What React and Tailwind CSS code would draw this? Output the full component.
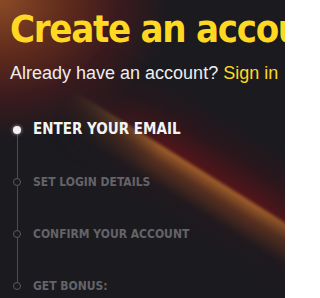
import React from "react";

const steps = [
  { label: "ENTER YOUR EMAIL", active: true },
  { label: "SET LOGIN DETAILS" },
  { label: "CONFIRM YOUR ACCOUNT" },
  { label: "GET BONUS:" },
];

export default function App() {
  return (
    <div className="relative w-[285px] h-[298px] overflow-hidden bg-[#1b1a1f]">
      <div className="absolute inset-0 bg-[radial-gradient(ellipse_170px_140px_at_0px_0px,#8a4a26_0%,#5e2a1c_40%,#3a1a1e_70%,transparent_100%)]" />
      <div className="absolute left-[-10px] top-[104px] w-[400px] h-[120px] rotate-[32deg] bg-[linear-gradient(to_bottom,transparent_0%,rgba(80,16,22,0.3)_25%,rgba(100,20,24,0.75)_49%,#a2602a_50%,rgba(130,64,32,0.6)_62%,rgba(50,24,28,0.25)_80%,transparent_100%)] blur-[1.5px] [mask-image:linear-gradient(to_right,transparent_15%,black_42%,black_70%,rgba(0,0,0,0.55)_100%)]" />
      <div className="relative flex flex-col pl-[10px] pt-[7px]">
        <h1 className="whitespace-nowrap text-[38px] leading-[44px] font-bold text-[#ffd823] font-['Liberation_Sans_Narrow','DejaVu_Sans_Condensed','DejaVu_Sans',sans-serif] tracking-[-1.3px]">
          Create an account
        </h1>
        <p className="mt-[11px] whitespace-nowrap text-[18px] leading-[22px] text-[#eeeeee] font-['Liberation_Sans',Arial,sans-serif]">
          Already have an account? <span className="text-[#ffd823]">Sign in</span>
        </p>
      </div>
      <div className="relative mt-[37px] pl-[13px]">
        <div className="absolute left-[16.5px] top-[10px] h-[156px] w-px bg-[#4d4c52]" />
        <div className="flex flex-col gap-[35px]">
          {steps.map((s, i) => (
            <div key={i} className="flex items-center h-[17px]">
              <div className="w-[20px] flex justify-start">
                {s.active ? (
                  <div className="relative w-[8px] h-[8px] rounded-full bg-[#f2f2f2] shadow-[0_0_3px_1px_rgba(255,255,255,0.35)]" />
                ) : (
                  <div className="relative w-[8px] h-[8px] rounded-full border-[1.5px] border-[#5b5a60] bg-[#1b1a1f]" />
                )}
              </div>
              <span
                className={
                  "whitespace-nowrap font-bold font-['DejaVu_Sans_Condensed','DejaVu_Sans',sans-serif] " +
                  (s.active
                    ? "text-[15px] tracking-[0px] text-[#f4f4f4]"
                    : "text-[12px] tracking-[0px] text-[#646368]")
                }
              >
                {s.label}
              </span>
            </div>
          ))}
        </div>
      </div>
    </div>
  );
}
